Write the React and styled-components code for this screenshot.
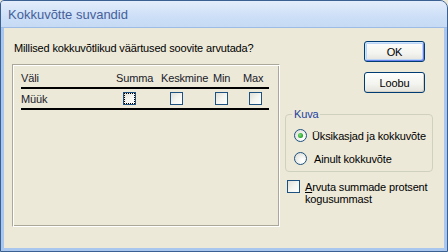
import React from "react";
import styled, { createGlobalStyle } from "styled-components";

const Global = createGlobalStyle`
  html, body { margin: 0; padding: 0; background: #ece9d8; }
  body {
    font-family: Tahoma, "Liberation Sans", Arial, sans-serif;
    font-size: 11px;
    letter-spacing: -0.15px;
    color: #000;
  }
`;

const Window = styled.div`
  width: 448px;
  height: 252px;
  box-sizing: border-box;
  display: flex;
  flex-direction: column;
  background: #a9c6ee;
  border: 1px solid #3a5f91;
  border-radius: 4px 8px 0 0;
  overflow: hidden;
`;

const TitleBar = styled.div`
  height: 26px;
  flex-shrink: 0;
  display: flex;
  align-items: center;
  padding-left: 7px;
  background: linear-gradient(#e3edfb, #cddff7 60%, #c6daf5);
  border-bottom: 1px solid #9dbbe4;
  font-size: 13px;
  letter-spacing: 0;
  color: #46609a;
`;

const Body = styled.div`
  flex: 1;
  margin: 0 3px 3px 3px;
  background: #ece9d8;
  display: flex;
  padding: 14px 0 0 8px;
  gap: 5px;
`;

const LeftCol = styled.div`
  width: 268px;
  display: flex;
  flex-direction: column;
`;

const Prompt = styled.div`
  height: 13px;
  line-height: 13px;
  padding-left: 2px;
`;

const Panel = styled.div`
  margin-top: 9px;
  height: 163px;
  box-sizing: border-box;
  border: 1px solid;
  border-color: #aca899 #fff #fff #aca899;
  box-shadow: inset 1px 1px #fff, inset -1px -1px #aca899;
  padding: 3px 0 0 8px;
`;

const Grid = styled.div`
  display: grid;
  grid-template-columns: 91px 46px 52px 28px 31px;
  width: 248px;
`;

const Cell = styled.div`
  height: 19px;
  display: flex;
  align-items: center;
  padding-left: ${(p) => p.$pad || 0}px;
  border-bottom: 2px solid #000;
  color: #1a1a2a;
`;

const CheckBox = styled.span`
  display: inline-block;
  width: 11px;
  height: 11px;
  border: 1px solid #1c5180;
  background: linear-gradient(135deg, #e0e0da 0%, #f4f4f0 50%, #fff 100%);
  position: relative;
  flex-shrink: 0;
  ${(p) =>
    p.$focus &&
    `&::after{content:"";position:absolute;inset:0;border:1px dotted #000;}`}
`;

const RightCol = styled.div`
  width: 148px;
  display: flex;
  flex-direction: column;
`;

const Button = styled.button`
  align-self: flex-end;
  margin-right: 8px;
  width: 61px;
  height: 21px;
  box-sizing: border-box;
  border: 1px solid #003c74;
  border-radius: 3px;
  background: linear-gradient(#fefefd, #f3f3ef 60%, #e4e3dc);
  font: inherit;
  letter-spacing: inherit;
  color: #000;
  padding: 0;
  box-shadow: ${(p) =>
    p.$default
      ? "inset 1px 1px #cee7ff, inset -1px -1px #6982ee, inset 0 0 0 2px #bcd4f6"
      : "inset -1px -1px #d6d0c5"};
  margin-top: ${(p) => p.$mt}px;
`;

const Group = styled.fieldset`
  margin: 15px 0 0 0;
  padding: 4px 0 0 8px;
  height: 64px;
  box-sizing: border-box;
  border: 1px solid #d0d0bf;
  border-radius: 4px;
`;

const Legend = styled.legend`
  padding: 0 2px;
  margin-left: -2px;
  color: #1d3f9e;
  line-height: 12px;
`;

const RadioRow = styled.label`
  display: flex;
  align-items: center;
  height: 23px;
  gap: 5px;
`;

const Radio = styled.span`
  width: 11px;
  height: 11px;
  border-radius: 50%;
  border: 1px solid #1c5180;
  background: radial-gradient(circle at 70% 70%, #fff 10%, #e6e6e0 70%, #dcdcd5);
  display: flex;
  align-items: center;
  justify-content: center;
  margin-right: ${(p) => p.$space || 0}px;
  &::after {
    content: "";
    width: 5px;
    height: 5px;
    border-radius: 50%;
    background: ${(p) =>
      p.$on ? "radial-gradient(circle at 40% 40%, #7fe07f, #21a121 70%)" : "transparent"};
  }
`;

const CheckRow = styled.div`
  display: flex;
  gap: 5px;
  margin: 8px 0 0 2px;
  line-height: 12px;
`;

const CheckText = styled.span`
  margin-top: 1px;
`;

const Underline = styled.span`
  text-decoration: underline;
`;

const columns = [
  { label: "Summa", text: 4, box: 11 },
  { label: "Keskmine", text: 3, box: 12 },
  { label: "Min", text: 3, box: 5 },
  { label: "Max", text: 5, box: 11 },
];

export default function App() {
  return (
    <>
      <Global />
      <Window>
        <TitleBar>Kokkuvõtte suvandid</TitleBar>
        <Body>
          <LeftCol>
            <Prompt>Millised kokkuvõtlikud väärtused soovite arvutada?</Prompt>
            <Panel>
              <Grid>
                <Cell>Väli</Cell>
                {columns.map((c) => (
                  <Cell key={c.label} $pad={c.text}>
                    {c.label}
                  </Cell>
                ))}
                <Cell>Müük</Cell>
                {columns.map((c, i) => (
                  <Cell key={c.label} $pad={c.box}>
                    <CheckBox $focus={i === 0} />
                  </Cell>
                ))}
              </Grid>
            </Panel>
          </LeftCol>
          <RightCol>
            <Button $default $mt={-1}>OK</Button>
            <Button $mt={10}>Loobu</Button>
            <Group>
              <Legend>Kuva</Legend>
              <RadioRow>
                <Radio $on />
                Üksikasjad ja kokkuvõte
              </RadioRow>
              <RadioRow>
                <Radio $space={2} />
                Ainult kokkuvõte
              </RadioRow>
            </Group>
            <CheckRow>
              <CheckBox />
              <CheckText>
                <Underline>A</Underline>rvuta summade protsent
                <br />
                kogusummast
              </CheckText>
            </CheckRow>
          </RightCol>
        </Body>
      </Window>
    </>
  );
}
